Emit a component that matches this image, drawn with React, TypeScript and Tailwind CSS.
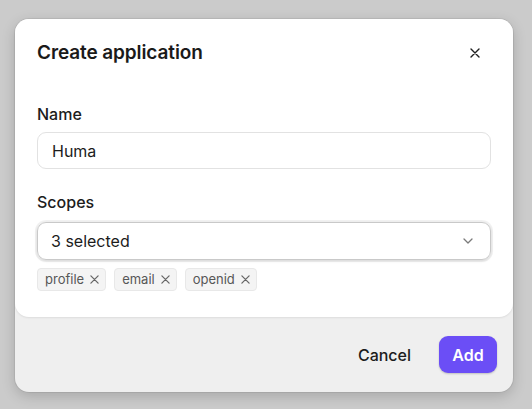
import React from "react";

const scopes = ["profile", "email", "openid"];

function XIcon({ size = 10, className = "" }: { size?: number; className?: string }) {
  return (
    <svg width={size} height={size} viewBox="0 0 10 10" className={className} fill="none">
      <path d="M1 1L9 9M9 1L1 9" stroke="currentColor" strokeWidth="1.4" strokeLinecap="round" />
    </svg>
  );
}

export default function App() {
  return (
    <div
      className="w-[532px] h-[409px] bg-[#cbcbcb] pt-[19px] pl-[15px] overflow-hidden"
      style={{ fontFamily: "Inter, 'Noto Sans', sans-serif" }}
    >
      <div className="w-[498px] rounded-[14px] bg-[#efefef] shadow-[0_4px_14px_rgba(0,0,0,0.18),0_0_0_1px_rgba(0,0,0,0.06)]">
        <div className="bg-white rounded-[14px] px-[22px] pt-[20px] pb-[26px] shadow-[0_1px_2px_rgba(0,0,0,0.08)]">
          <div className="flex items-center justify-between h-[28px]">
            <h2 className="text-[19px] font-semibold text-[#1a1a1a] tracking-[-0.1px]">Create application</h2>
            <button className="w-[28px] h-[28px] flex items-center justify-center text-[#1f1f1f] mr-[2px]">
              <XIcon size={10} />
            </button>
          </div>

          <label className="block mt-[35px] text-[16px] leading-[24px] font-medium text-[#1c1c1c]">Name</label>
          <div className="mt-[6px] h-[37px] rounded-[9px] border border-[#e2e2e2] flex items-center px-[14px] text-[16px] text-[#1c1c1c]">
            Huma
          </div>

          <label className="block mt-[21px] text-[16px] leading-[24px] font-medium text-[#1c1c1c]">Scopes</label>
          <div className="mt-[8px] h-[38px] rounded-[9px] border border-[#c9c9c9] shadow-[0_0_0_2px_rgba(0,0,0,0.05),0_1px_3px_rgba(0,0,0,0.12)] flex items-center justify-between pl-[13px] pr-[17px] text-[16px] text-[#1c1c1c]">
            <span>3 selected</span>
            <svg width="10" height="6" viewBox="0 0 10 6" fill="none" className="text-[#7a7a7a]">
              <path d="M1 1L5 5L9 1" stroke="currentColor" strokeWidth="1.3" strokeLinecap="round" strokeLinejoin="round" />
            </svg>
          </div>

          <div className="mt-[8px] flex gap-[8px]">
            {scopes.map((s) => (
              <span
                key={s}
                className="h-[23px] flex items-center gap-[6px] pl-[7px] pr-[6px] rounded-[4px] bg-[#f4f4f4] border border-[#e8e8e8] text-[13px] text-[#575757]"
              >
                {s}
                <XIcon size={9} className="text-[#666]" />
              </span>
            ))}
          </div>
        </div>

        <div className="h-[75px] flex items-center justify-end pr-[16px] gap-[12px]">
          <button className="px-[16px] h-[37px] text-[16px] font-medium text-[#1c1c1c]">Cancel</button>
          <button className="w-[58px] h-[37px] rounded-[9px] bg-[#6b4ef6] text-white text-[16px] font-semibold shadow-[0_1px_2px_rgba(0,0,0,0.2)]">
            Add
          </button>
        </div>
      </div>
    </div>
  );
}
